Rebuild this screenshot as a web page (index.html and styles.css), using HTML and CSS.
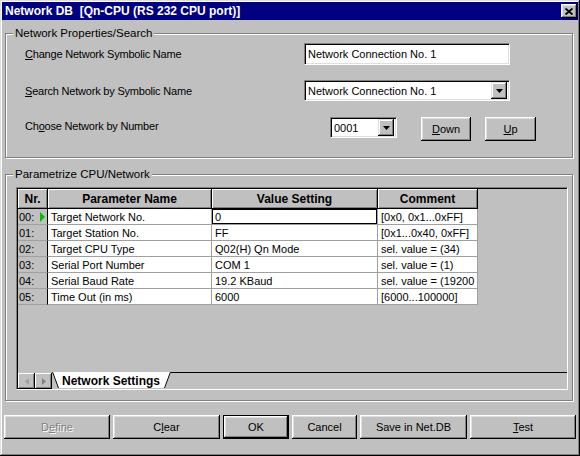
FILE: index.html
```html
<!DOCTYPE html>
<html lang="en">
<head>
    <meta charset="UTF-8">
    <title>Network DB</title>
    <link rel="stylesheet" href="styles.css">
</head>
<body>
    <div class="window">
        <div class="titlebar">
            <span class="title">Network DB&nbsp;&nbsp;[Qn-CPU (RS 232 CPU port)]</span>
            <span class="close-btn">
                <svg width="8" height="7" viewBox="0 0 8 7"><path d="M0.5 0.5L7.5 6.5M7.5 0.5L0.5 6.5" stroke="#000" stroke-width="1.8" fill="none"/></svg>
            </span>
        </div>

        <fieldset class="group group-search">
            <legend>Network Properties/Search</legend>
            <div class="group-body search-body">
                <div class="field-row row-name">
                    <label class="field-label"><u>C</u>hange Network Symbolic Name</label>
                    <div class="textbox">Network Connection No. 1</div>
                </div>
                <div class="field-row row-search">
                    <label class="field-label"><u>S</u>earch Network by Symbolic Name</label>
                    <div class="combo combo-wide">
                        <span class="combo-text">Network Connection No. 1</span>
                        <span class="drop-btn"><svg width="7" height="4" viewBox="0 0 7 4"><polygon points="0,0 7,0 3.5,4" fill="#000"/></svg></span>
                    </div>
                </div>
                <div class="field-row row-number">
                    <label class="field-label label-number">Ch<u>o</u>ose Network by Number</label>
                    <div class="combo combo-small">
                        <span class="combo-text">0001</span>
                        <span class="drop-btn"><svg width="7" height="4" viewBox="0 0 7 4"><polygon points="0,0 7,0 3.5,4" fill="#000"/></svg></span>
                    </div>
                    <button class="btn btn-down"><u>D</u>own</button>
                    <button class="btn btn-up"><u>U</u>p</button>
                </div>
            </div>
        </fieldset>

        <fieldset class="group group-param">
            <legend>Parametrize CPU/Network</legend>
            <div class="group-body param-body">
                <div class="grid-frame">
                    <div class="grid-area">
                        <table class="grid">
                            <colgroup>
                                <col class="col-nr">
                                <col class="col-name">
                                <col class="col-value">
                                <col class="col-comment">
                            </colgroup>
                            <thead>
                                <tr>
                                    <th>Nr.</th>
                                    <th>Parameter Name</th>
                                    <th>Value Setting</th>
                                    <th>Comment</th>
                                </tr>
                            </thead>
                            <tbody>
                                <tr>
                                    <td class="nr"><div class="nr-cell"><span>00:</span><span class="row-marker"></span></div></td>
                                    <td>Target Network No.</td>
                                    <td class="current">0</td>
                                    <td>[0x0, 0x1...0xFF]</td>
                                </tr>
                                <tr>
                                    <td class="nr">01:</td>
                                    <td>Target Station No.</td>
                                    <td>FF</td>
                                    <td>[0x1...0x40, 0xFF]</td>
                                </tr>
                                <tr>
                                    <td class="nr">02:</td>
                                    <td>Target CPU Type</td>
                                    <td>Q02(H) Qn Mode</td>
                                    <td>sel. value = (34)</td>
                                </tr>
                                <tr>
                                    <td class="nr">03:</td>
                                    <td>Serial Port Number</td>
                                    <td>COM 1</td>
                                    <td>sel. value = (1)</td>
                                </tr>
                                <tr>
                                    <td class="nr">04:</td>
                                    <td>Serial Baud Rate</td>
                                    <td>19.2 KBaud</td>
                                    <td>sel. value = (19200</td>
                                </tr>
                                <tr>
                                    <td class="nr">05:</td>
                                    <td>Time Out (in ms)</td>
                                    <td>6000</td>
                                    <td>[6000...100000]</td>
                                </tr>
                            </tbody>
                        </table>
                    </div>
                    <div class="tab-strip">
                        <span class="scroll-btn"><svg width="4" height="7" viewBox="0 0 4 7"><polygon points="4,0 4,7 0,3.5" fill="#a0a0a0"/></svg></span>
                        <span class="scroll-btn"><svg width="4" height="7" viewBox="0 0 4 7"><polygon points="0,0 0,7 4,3.5" fill="#808080"/></svg></span>
                        <div class="tab">
                            <svg class="tab-shape" width="119" height="16" viewBox="0 0 119 16">
                                <polygon points="0,0 119,0 113,16 6,16" fill="#fff"/>
                                <path d="M0.5 0L6.5 16M112.5 16L118.5 0" stroke="#000" stroke-width="1" fill="none"/>
                            </svg>
                            <span class="tab-label">Network Settings</span>
                        </div>
                        <div class="tab-rest"></div>
                    </div>
                </div>
            </div>
        </fieldset>

        <div class="button-row">
            <button class="btn btn-define" disabled>D<u>e</u>fine</button>
            <button class="btn btn-clear">C<u>l</u>ear</button>
            <button class="btn btn-ok btn-default">OK</button>
            <button class="btn btn-cancel">Cancel</button>
            <button class="btn btn-save">Save in Net.DB</button>
            <button class="btn btn-test"><u>T</u>est</button>
        </div>
    </div>
</body>
</html>
```

FILE: styles.css
```css
* {
    box-sizing: border-box;
}
body {
    margin: 0;
    background: #c0c0c0;
    font-family: "Liberation Sans", Arial, sans-serif;
    font-size: 11px;
    color: #000;
}
.window {
    width: 580px;
    height: 456px;
    padding: 2px;
    background: #c0c0c0;
    box-shadow: inset -1px -1px #000, inset 1px 1px #dfdfdf, inset -2px -2px #808080, inset 2px 2px #fff;
}
.titlebar {
    height: 18px;
    display: flex;
    align-items: center;
    justify-content: space-between;
    padding: 0 1px 0 3px;
    background: #000080;
}
.title {
    color: #fff;
    font-weight: bold;
    font-size: 12px;
}
.close-btn {
    width: 16px;
    height: 14px;
    display: flex;
    align-items: center;
    justify-content: center;
    background: #c0c0c0;
    box-shadow: inset -1px -1px #000, inset 1px 1px #fff, inset -2px -2px #808080, inset 2px 2px #dfdfdf;
}

/* group boxes */
.group {
    margin: 6px 0 0 3px;
    width: 568px;
    padding: 0;
    border: 1px solid #808080;
    box-shadow: inset 1px 1px #fff, 1px 1px #fff;
}
.group legend {
    margin-left: 7px;
    padding: 0 2px;
    font-size: 11.5px;
    line-height: 14px;
    background: #c0c0c0;
}
.group-param {
    margin-top: 9px;
}
.search-body {
    padding: 3px 0 16px 19px;
}
.param-body {
    padding: 6px 0 10px 10px;
}

/* search rows */
.field-row {
    display: flex;
    align-items: center;
}
.row-name {
    height: 22px;
}
.row-search {
    height: 21px;
    margin-top: 15px;
}
.row-number {
    height: 24px;
    margin-top: 16px;
    align-items: flex-start;
}
.field-label {
    width: 279px;
    letter-spacing: -0.2px;
}
.label-number {
    width: 305px;
    margin-top: 3px;
}
.textbox,
.combo {
    background: #fff;
    border: 1px solid;
    border-color: #808080 #fff #fff #808080;
    box-shadow: inset 1px 1px #000, inset -1px -1px #dfdfdf;
    padding-left: 3px;
    display: flex;
    align-items: center;
}
.textbox {
    width: 206px;
    height: 22px;
}
.combo {
    height: 21px;
    justify-content: space-between;
    padding-right: 2px;
}
.combo-wide {
    width: 206px;
}
.combo-small {
    width: 67px;
}
.drop-btn {
    width: 16px;
    height: 17px;
    display: flex;
    align-items: center;
    justify-content: center;
    background: #c0c0c0;
    box-shadow: inset -1px -1px #000, inset 1px 1px #dfdfdf, inset -2px -2px #808080, inset 2px 2px #fff;
}

/* buttons */
.btn {
    height: 24px;
    padding: 0;
    border: none;
    background: #c0c0c0;
    font-family: "Liberation Sans", Arial, sans-serif;
    font-size: 11px;
    color: #000;
    box-shadow: inset -1px -1px #000, inset 1px 1px #fff, inset -2px -2px #808080, inset 2px 2px #dfdfdf;
}
.btn-default {
    border: 1px solid #000;
}
.btn[disabled] {
    color: #808080;
    text-shadow: 1px 1px #fff;
}
.btn-down {
    width: 50px;
    margin-left: 24px;
}
.btn-up {
    width: 51px;
    margin-left: 14px;
}

/* grid */
.grid-frame {
    width: 552px;
    padding: 1px 0 0 1px;
    border: 1px solid;
    border-color: #808080 #fff #fff #808080;
    box-shadow: inset 1px 1px #000;
}
.grid-area {
    height: 183px;
}
.grid {
    border-collapse: separate;
    border-spacing: 0;
    table-layout: fixed;
    width: 460px;
}
.col-nr {
    width: 30px;
}
.col-name {
    width: 164px;
}
.col-value {
    width: 166px;
}
.col-comment {
    width: 100px;
}
.grid th {
    height: 20px;
    padding: 0;
    font-size: 12px;
    font-weight: bold;
    text-align: center;
    background: #c0c0c0;
    border-right: 1px solid #000;
    border-bottom: 1px solid #000;
    box-shadow: inset 1px 1px #fff, inset -1px -1px #808080;
}
.grid td {
    height: 16px;
    padding: 0 0 0 3px;
    background: #fff;
    white-space: nowrap;
    overflow: hidden;
    border-right: 1px solid #a0a0a0;
    border-bottom: 1px solid #a0a0a0;
}
.grid td.nr {
    padding-left: 1px;
    background: #c0c0c0;
    border-right-color: #000;
}
.grid td.current {
    box-shadow: inset 0 0 0 1px #000;
}
.nr-cell {
    display: flex;
    align-items: center;
    justify-content: space-between;
}
.row-marker {
    width: 0;
    height: 0;
    margin-right: 2px;
    border-top: 5px solid transparent;
    border-bottom: 5px solid transparent;
    border-left: 5px solid #00c000;
}

/* sheet tabs */
.tab-strip {
    height: 17px;
    display: flex;
    align-items: flex-end;
}
.scroll-btn {
    width: 17px;
    height: 16px;
    display: flex;
    align-items: center;
    justify-content: center;
    background: #c0c0c0;
    box-shadow: inset -1px -1px #000, inset 1px 1px #fff, inset -2px -2px #808080;
}
.tab {
    position: relative;
    width: 119px;
    height: 17px;
    padding-left: 10px;
    display: flex;
    align-items: center;
}
.tab-shape {
    position: absolute;
    left: 0;
    top: 0;
}
.tab-label {
    position: relative;
    font-size: 12px;
    font-weight: bold;
}
.tab-rest {
    flex: 1;
    height: 17px;
    border-top: 1px solid #000;
}

/* bottom buttons */
.button-row {
    display: flex;
    gap: 3px;
    margin: 14px 0 0 2px;
}
.btn-define {
    width: 106px;
}
.btn-clear {
    width: 107px;
}
.btn-ok {
    width: 66px;
}
.btn-cancel {
    width: 65px;
}
.btn-save {
    width: 107px;
}
.btn-test {
    width: 106px;
}
```
